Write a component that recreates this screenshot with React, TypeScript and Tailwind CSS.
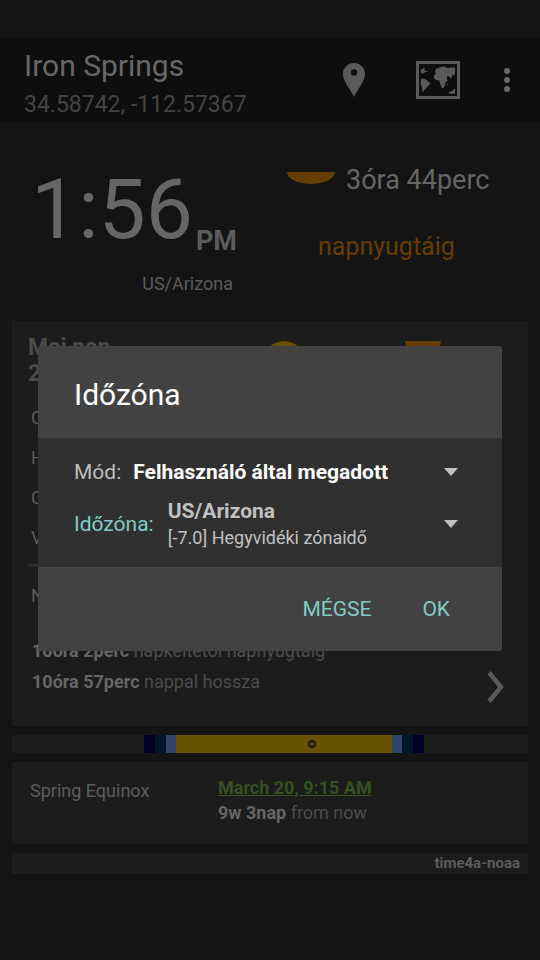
import React from "react";

const twilightRows = ["Csill.", "Haj.", "Civil", "Val."];

function PinIcon() {
  return (
    <svg viewBox="0 0 22 34" className="h-[34px] w-[22px] fill-[#5a5a5a]" aria-hidden="true">
      <path
        fillRule="evenodd"
        d="M11 0C5 0 0 4.8 0 10.8C0 18.5 7.5 26.500 11 34C14.500 26.500 22 18.500 22 10.800C22 4.800 17 0 11 0ZM11 6.300A3.200 3.200 0 1 1 11 12.700A3.200 3.200 0 1 1 11 6.300Z"
      />
    </svg>
  );
}

function MapIcon() {
  return (
    <svg viewBox="0 0 132 114" className="h-[38px] w-11 fill-[#5a5a5a]" aria-hidden="true">
      <path fillRule="evenodd" d="M0 0H132V114H0ZM9 9V105H123V9Z" />
      <path d="M15 24L19 25L22 20L27 23L25 28L31 30L36 29L34 32L28 32L24 36L18 38L15 34Z" />
      <path d="M15 54L23 53L32 57L36 62L42 65L40 71L34 78L27 86L22 88L24 93L20 93L18 80L14 70Z" />
      <path d="M58 27L62 22L70 22L70 17L76 19L84 16L92 20L104 20L117 19V36L114 44L110 39L108 47L103 52L98 45L94 46L92 54L95 58L88 66L86 76L82 81L77 81L72 67L70 58L60 58L54 50L54 42L61 38L58 36Z" />
      <path d="M92 69L95 67L94 73L92 75ZM117 82V98H99V94L107 90Z" />
    </svg>
  );
}

function Caret() {
  return (
    <svg viewBox="0 0 14 8" className="pointer-events-none h-2 w-3.5 shrink-0 fill-[#c1c1c1]" aria-hidden="true">
      <path d="M0 0H14L7 8Z" />
    </svg>
  );
}

function Header() {
  return (
    <header className="flex items-start bg-[#0e0e0e] pr-[30px] pt-2.5 pl-6">
      <div className="min-w-0 flex-1">
        <h1 className="text-[30px] leading-9 text-[#686868]">Iron Springs</h1>
        <p className="pt-1 text-[23px] leading-[34px] text-[#444444]">34.58742, -112.57367</p>
      </div>
      <div className="flex h-16 items-center">
        <button type="button" aria-label="Hely" className="mr-[51px]">
          <PinIcon />
        </button>
        <button type="button" aria-label="Térkép" className="mr-11">
          <MapIcon />
        </button>
        <button type="button" aria-label="Menü" className="flex flex-col gap-[3px]">
          <span className="size-1.5 rounded-full bg-[#6a6a6a]" />
          <span className="size-1.5 rounded-full bg-[#6a6a6a]" />
          <span className="size-1.5 rounded-full bg-[#6a6a6a]" />
        </button>
      </div>
    </header>
  );
}

function Clock() {
  return (
    <section className="grid h-[199px] grid-cols-2">
      <div className="flex flex-col items-end pr-[33px] pt-[34px]">
        <p className="flex text-[#666666]">
          <span className="text-[84px] leading-[108px]">1:56</span>
          <span className="ml-[3px] self-end pb-[7px] text-[27px] leading-8 font-bold text-[#5c5c5c]">PM</span>
        </p>
        <p className="mt-2 pr-1 text-lg leading-6 text-[#5c5c5c]">US/Arizona</p>
      </div>
      <div className="flex flex-col pl-[17px] pt-10">
        <p className="flex items-center text-[27px] leading-9 text-[#666666]">
          <span className="mr-[11px] mb-1 h-3 w-12 rounded-[0_0_50%_50%/0_0_100%_100%] bg-[#663d00]" />
          3óra 44perc
        </p>
        <p className="mt-[33px] pl-[31px] text-[25px] leading-8 text-[#663d00]">napnyugtáig</p>
      </div>
    </section>
  );
}

function DayCard() {
  return (
    <section className="bg-[#1c1c1c] px-4 pb-[23px] pt-3.5 text-[18px] text-[#5c5c5c]">
      <div className="flex">
        <h2 className="flex-1 text-[23px] leading-[26px] font-bold text-[#4c4c4c]">
          Mai nap
          <br />
          2018
        </h2>
        <div className="flex w-64 gap-[101px] pl-2 pt-1.5">
          <span className="size-10 rounded-full bg-[#665200]" />
          <span className="h-4 w-9 rounded-[0_0_50%_50%/0_0_100%_100%] bg-[#663d00]" />
        </div>
      </div>
      <ul className="mt-[11px] pl-[3px]">
        {twilightRows.map((row) => (
          <li key={row} className="leading-10">
            {row}
          </li>
        ))}
      </ul>
      <div className="mt-1.5 mr-4 h-[3px] bg-[#2b2b2b]" />
      <p className="mt-[9px] pl-[3px] leading-10">Nap</p>
      <div className="mt-[19px] flex items-end justify-between pr-2 pl-1">
        <div className="pb-1.5 leading-[31px] text-[#4c4c4c]">
          <p>
            <b className="text-[#666666]">10óra 2perc</b> napkeltétől napnyugtáig
          </p>
          <p>
            <b className="text-[#666666]">10óra 57perc</b> nappal hossza
          </p>
        </div>
        <button type="button" aria-label="Következő">
          <svg viewBox="0 0 17 32" className="h-8 w-[17px] fill-none stroke-[#5a5a5a] stroke-[4.5]" aria-hidden="true">
            <path d="M2 1.500L14 16L2 30.500" />
          </svg>
        </button>
      </div>
    </section>
  );
}

function DayBar() {
  return (
    <div className="relative grid h-[18px] grid-cols-[132fr_11fr_11fr_10fr_216fr_10fr_11fr_11fr_104fr] bg-[#1c1c1c]">
      <span />
      <span className="bg-[#000026]" />
      <span className="bg-[#001528]" />
      <span className="bg-[#33436a]" />
      <span className="bg-[#665200]" />
      <span className="bg-[#33436a]" />
      <span className="bg-[#001528]" />
      <span className="bg-[#000026]" />
      <span />
      <span className="absolute top-1/2 left-[58.1%] size-2 -translate-1/2 rounded-full border-2 border-[#1c1c1c] bg-[#663d00]" />
    </div>
  );
}

function EquinoxCard() {
  return (
    <section className="flex h-[82px] bg-[#1c1c1c] px-[18px] pt-[13px] text-[18px] leading-[25px]">
      <p className="w-[188px] pt-[3px] text-[#5c5c5c]">Spring Equinox</p>
      <div className="text-[#4c4c4c]">
        <a href="#equinox" className="block font-bold text-[#375020] underline">
          March 20, 9:15 AM
        </a>
        <p>
          <b className="text-[#666666]">9w 3nap</b> from now
        </p>
      </div>
    </section>
  );
}

function TimezoneDialog() {
  return (
    <div className="absolute inset-x-0 top-9 bottom-0 flex items-center px-[38px]">
      <div role="dialog" aria-modal="true" aria-labelledby="dialog-title" className="w-full overflow-hidden rounded-[3px] bg-[#424242]">
        <h2 id="dialog-title" className="px-9 pt-[31px] pb-[25px] text-[30px] leading-9 text-white">
          Időzóna
        </h2>
        <div className="bg-[#303030] px-9 pt-[18px] pb-4 text-[21px]">
          <div className="flex items-center pr-2">
            <label htmlFor="mode" className="leading-8 text-[#bebebe]">
              Mód:
            </label>
            <select id="mode" className="ml-3 h-8 min-w-0 flex-1 appearance-none bg-transparent leading-8 font-bold text-white">
              <option>Felhasználó által megadott</option>
            </select>
            <Caret />
          </div>
          <div className="mt-[9px] flex items-center pr-2">
            <label htmlFor="zone" className="leading-7 text-[#80cbc4]">
              Időzóna:
            </label>
            <div className="relative ml-3.5 flex flex-1 items-center justify-between text-[#c1c1c1]">
              <div>
                <p className="leading-7 font-bold">US/Arizona</p>
                <p className="text-[18px] leading-[26px]">[-7.0] Hegyvidéki zónaidő</p>
              </div>
              <Caret />
              <select id="zone" className="absolute inset-0 w-full opacity-0">
                <option>US/Arizona</option>
              </select>
            </div>
          </div>
        </div>
        <div className="flex h-[84px] items-center justify-end gap-[51px] pt-0.5 pr-[52px] text-[21px] text-[#80cbc4]">
          <button type="button">MÉGSE</button>
          <button type="button">OK</button>
        </div>
      </div>
    </div>
  );
}

export default function App() {
  return (
    <div className="relative min-h-screen bg-[#141414] pt-[38px] font-['Roboto',sans-serif]">
      <Header />
      <Clock />
      <main className="flex flex-col gap-[9px] px-3">
        <DayCard />
        <DayBar />
        <EquinoxCard />
        <footer className="bg-[#1c1c1c] pr-2 text-right text-[15px] leading-[21px] font-bold text-[#5c5c5c]">time4a-noaa</footer>
      </main>
      <TimezoneDialog />
    </div>
  );
}
